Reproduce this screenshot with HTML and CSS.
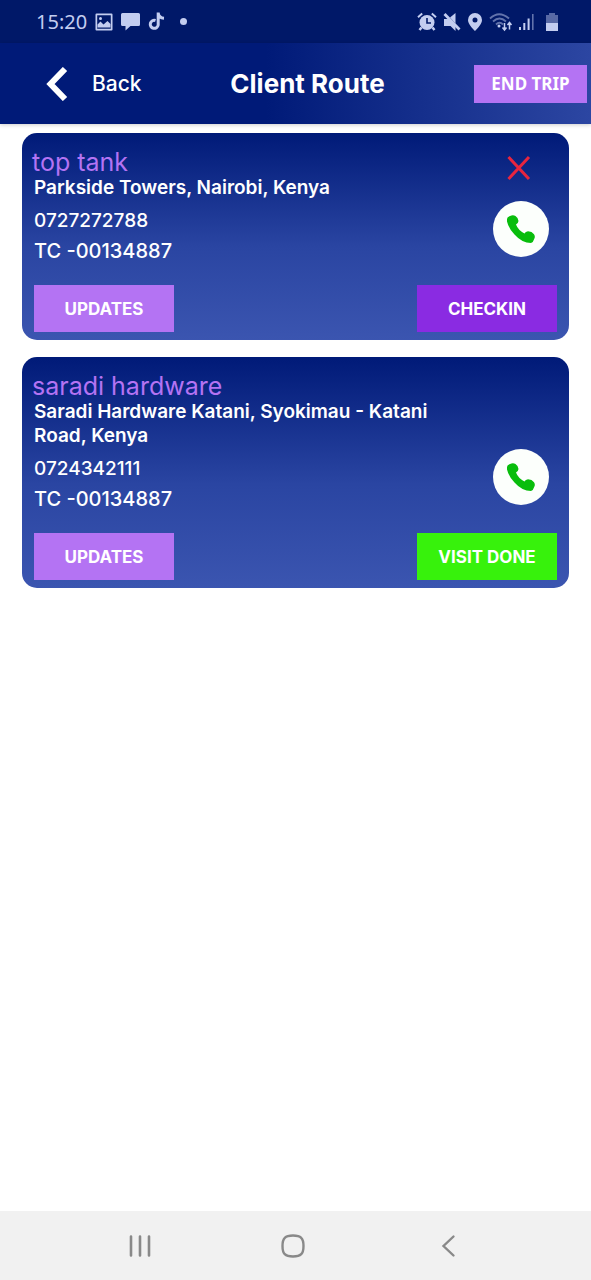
FILE: index.html
```html
<!DOCTYPE html>
<html lang="en">
<head>
<meta charset="utf-8">
<meta name="viewport" content="width=device-width, initial-scale=1">
<title>Client Route</title>
<link rel="stylesheet" href="styles.css">
</head>
<body>
<div class="status-bar">
  <div class="status-left">
    <span class="clock">15:20</span>
    <svg width="18" height="18" viewBox="0 0 18 18" fill="currentColor"><path fill-rule="evenodd" d="M1.500 0.500h15q1 0 1 1v15q0 1-1 1h-15q-1 0-1-1v-15q0-1 1-1zM2.200 2.200v13.600h13.600V2.200z"/><path d="M2.500 14.500v-3l3-3 3 3 4-3.500 3 3v3.500z"/><circle cx="5.500" cy="5.500" r="1.500"/></svg>
    <svg width="19" height="19" viewBox="0 0 19 19" fill="currentColor"><path d="M1.500 1h16q1.500 0 1.500 1.500v10q0 1.500-1.500 1.500H9.500L4.500 18.500V14h-3Q0 14 0 12.500v-10Q0 1 1.500 1z"/></svg>
    <svg width="17" height="19" viewBox="0 0 17 19" fill="none" stroke="currentColor" stroke-width="3"><path d="M7.500 8.500A4 4 0 1 0 10.200 13V0.500M10.200 1q.6 5 5.800 5.300"/></svg>
    <span class="dot"></span>
  </div>
  <div class="status-right">
    <svg width="20" height="20" viewBox="0 0 20 20" fill="none" stroke="currentColor"><circle cx="10" cy="10.500" r="7.500" fill="currentColor" stroke="none"/><path d="M1 5.200 5.200 1.500M19 5.200 14.800 1.500" stroke-width="2"/><path d="M4.500 15.500 2.500 18M15.500 15.500l2 2.500" stroke-width="2.500"/><path d="M10 6v5h4" stroke="#001868" stroke-width="1.600"/></svg>
    <svg width="18" height="20" viewBox="0 0 18 20" fill="currentColor"><path d="M1 7h4.500l7 7v5l-5-5H1zM7 5.500l5.500-4.500v10.500z"/><path d="M1.500 2 16.500 17.500" stroke="currentColor" stroke-width="2.800"/></svg>
    <svg width="16" height="20" viewBox="0 0 16 20" fill="currentColor"><path fill-rule="evenodd" d="M8 1a7 7 0 0 1 7 7c0 4-4.500 8.500-7 11C5.500 16.500 1 12 1 8a7 7 0 0 1 7-7zM8 5.500a2.500 2.500 0 1 0 0 5 2.500 2.500 0 0 0 0-5z"/></svg>
    <svg width="24" height="20" viewBox="0 0 24 20" fill="none" stroke="currentColor"><g stroke-width="1.800" opacity=".5"><path d="M1 6.500Q10-2 20 6.500M4 9.500q6.500-6 13 0M7 12.500q3.500-3.500 7 0"/></g><circle cx="10" cy="14" r="1.500" fill="currentColor" stroke="none"/><path d="M15.500 11v7m-2-2.500 2 2.500 2-2.500M20.500 17.500v-7m-2 2.500 2-2.500 2 2.500" stroke-width="1.500"/></svg>
    <svg width="16" height="20" viewBox="0 0 16 20" fill="currentColor"><path d="M0 15h2v3H0zM4.300 11h2v7h-2zM8.600 6.500h2V18h-2z"/><path d="M13 2h1.600v16H13z" opacity=".5"/></svg>
    <svg class="battery" width="12" height="20" viewBox="0 0 12 20" fill="currentColor"><path d="M3 1h6v2h3v8H0V3h3z" opacity=".45"/><path d="M0 11h12v8H0z"/></svg>
  </div>
</div>

<header class="app-header">
  <button class="back" type="button">
    <svg width="22" height="34" viewBox="0 0 22 34" fill="none" stroke="currentColor" stroke-width="6"><path d="M19 2 4.500 17 19 32"/></svg>
    Back
  </button>
  <h1>Client Route</h1>
  <button class="end-trip" type="button">END TRIP</button>
</header>

<main class="routes">
  <article class="card">
    <div class="card-body">
      <div class="details">
        <h2>top tank</h2>
        <p class="address">Parkside Towers, Nairobi, Kenya</p>
        <p class="phone">0727272788</p>
        <p class="code">TC -00134887</p>
      </div>
      <div class="tools">
        <button class="remove" type="button" aria-label="Remove">
          <svg width="24" height="26" viewBox="0 0 24 26" fill="none" stroke="currentColor" stroke-width="3"><path d="M1.500 2 22 24M22 2 1.500 24"/></svg>
        </button>
        <button class="call" type="button" aria-label="Call top tank">
          <svg width="30" height="30" viewBox="0 0 30 30" fill="currentColor"><path d="M1 5Q1 3 4 2 7 .5 9.500 2 12.500 4 12.500 7 12.300 9 10 10.500q2 5.500 8.500 9 1-2 3.500-2.200 4 .2 6 3 1.500 2 .3 4.500-1 3.500-3.300 4.200Q16 29 8.500 20.500 2.500 14 1 7.500z"/></svg>
        </button>
      </div>
    </div>
    <div class="actions">
      <button class="action updates" type="button">UPDATES</button>
      <button class="action checkin" type="button">CHECKIN</button>
    </div>
  </article>

  <article class="card">
    <div class="card-body">
      <div class="details">
        <h2>saradi hardware</h2>
        <p class="address">Saradi Hardware Katani, Syokimau - Katani Road, Kenya</p>
        <p class="phone">0724342111</p>
        <p class="code">TC -00134887</p>
      </div>
      <div class="tools">
        <button class="call" type="button" aria-label="Call saradi hardware">
          <svg width="30" height="30" viewBox="0 0 30 30" fill="currentColor"><path d="M1 5Q1 3 4 2 7 .5 9.500 2 12.500 4 12.500 7 12.300 9 10 10.500q2 5.500 8.500 9 1-2 3.500-2.200 4 .2 6 3 1.500 2 .3 4.500-1 3.500-3.300 4.200Q16 29 8.500 20.500 2.500 14 1 7.500z"/></svg>
        </button>
      </div>
    </div>
    <div class="actions">
      <button class="action updates" type="button">UPDATES</button>
      <button class="action done" type="button">VISIT DONE</button>
    </div>
  </article>
</main>

<nav class="system-nav">
  <button type="button" aria-label="Recent apps"><svg width="24" height="24" viewBox="0 0 24 24" fill="none" stroke="currentColor" stroke-width="2.600" stroke-linecap="round"><path d="M3 2.500v19M12 2.500v19M21 2.500v19"/></svg></button>
  <button type="button" aria-label="Home"><svg width="24" height="24" viewBox="0 0 24 24" fill="none" stroke="currentColor" stroke-width="2.400"><path d="M12 1.500q6 0 8.200 2.300Q22.500 6 22.500 12t-2.300 8.200Q18 22.500 12 22.500t-8.200-2.300Q1.500 18 1.500 12t2.300-8.200Q6 1.500 12 1.500z"/></svg></button>
  <button type="button" aria-label="Back"><svg width="24" height="24" viewBox="0 0 24 24" fill="none" stroke="currentColor" stroke-width="2.400" stroke-linecap="round"><path d="M18.500 2.500 8.500 12l10 9.500"/></svg></button>
</nav>
</body>
</html>
```
FILE: styles.css
```css
* {
  box-sizing: border-box;
}

body {
  margin: 0;
  min-height: 100vh;
  display: flex;
  flex-direction: column;
  background: #fff;
  color: #fff;
  font-family: Inter, "Liberation Sans", sans-serif;
  font-weight: 500;
}

h1, h2, p {
  margin: 0;
}

button {
  border: 0;
  padding: 0;
  background: none;
  color: inherit;
  font: inherit;
}

svg {
  display: block;
  flex: none;
}

.status-bar {
  height: 43px;
  padding: 0 33px 0 36px;
  display: flex;
  align-items: center;
  justify-content: space-between;
  background: #001868;
  color: #c3cdf0;
}

.status-left,
.status-right {
  display: flex;
  align-items: center;
}

.status-left {
  gap: 8px;
}

.status-right {
  gap: 6px;
}

.clock {
  font-family: "Noto Sans", sans-serif;
  font-size: 20px;
  font-weight: 400;
}

.dot {
  width: 7px;
  height: 7px;
  margin-left: 7px;
  border-radius: 50%;
  background: currentColor;
}

.battery {
  margin-left: 5px;
}

.app-header {
  height: 81px;
  padding: 0 4px 0 28px;
  display: grid;
  grid-template-columns: 1fr auto 1fr;
  align-items: center;
  background: linear-gradient(90deg, #001a78 45%, #2c46a2);
  box-shadow: 0 1px 4px rgba(0, 0, 0, 0.2);
}

.back {
  padding-left: 18px;
  display: flex;
  align-items: center;
  gap: 24px;
  font-size: 21px;
}

.app-header h1 {
  font-size: 26px;
  font-weight: 700;
}

.end-trip {
  justify-self: end;
  width: 113px;
  height: 38px;
  background: #b473f3;
  font-family: "Noto Sans", sans-serif;
  font-size: 17px;
  font-weight: 700;
}

.routes {
  flex: 1;
  padding: 9px 22px;
  display: flex;
  flex-direction: column;
  gap: 17px;
}

.card {
  padding: 16px 10px 8px;
  border-radius: 15px;
  background: linear-gradient(#001a78, #2a45a2 55%, #3b55b0);
}

.card-body {
  display: flex;
  justify-content: space-between;
}

.details {
  flex: 1;
  padding-bottom: 22px;
}

.details h2 {
  color: #b473f3;
  font-size: 25px;
  font-weight: 400;
  line-height: 27px;
}

.details p {
  padding-left: 2px;
  font-size: 19px;
  line-height: 24px;
}

.details .address {
  font-weight: 600;
}

.details .phone {
  margin-top: 9px;
}

.details .code {
  margin-top: 6px;
  font-size: 20px;
}

.tools {
  width: 96px;
  padding: 0 10px 28px 0;
  display: flex;
  flex-direction: column;
  align-items: flex-end;
  justify-content: flex-end;
  gap: 20px;
}

.remove {
  margin-right: 18px;
  color: #e8253f;
}

.call {
  width: 56px;
  height: 56px;
  display: grid;
  place-items: center;
  border-radius: 50%;
  background: #fcfffc;
  color: #08bd0c;
}

.actions {
  padding: 0 2px;
  display: flex;
  justify-content: space-between;
}

.action {
  width: 140px;
  height: 47px;
  font-size: 17px;
  font-weight: 700;
}

.updates {
  background: #b473f3;
}

.checkin {
  background: #8a2be2;
}

.done {
  background: #37f20c;
}

.system-nav {
  height: 69px;
  padding: 0 67px 0 63px;
  display: grid;
  grid-template-columns: repeat(3, 1fr);
  align-items: center;
  justify-items: center;
  background: #f1f1f1;
  color: #898989;
}
```
